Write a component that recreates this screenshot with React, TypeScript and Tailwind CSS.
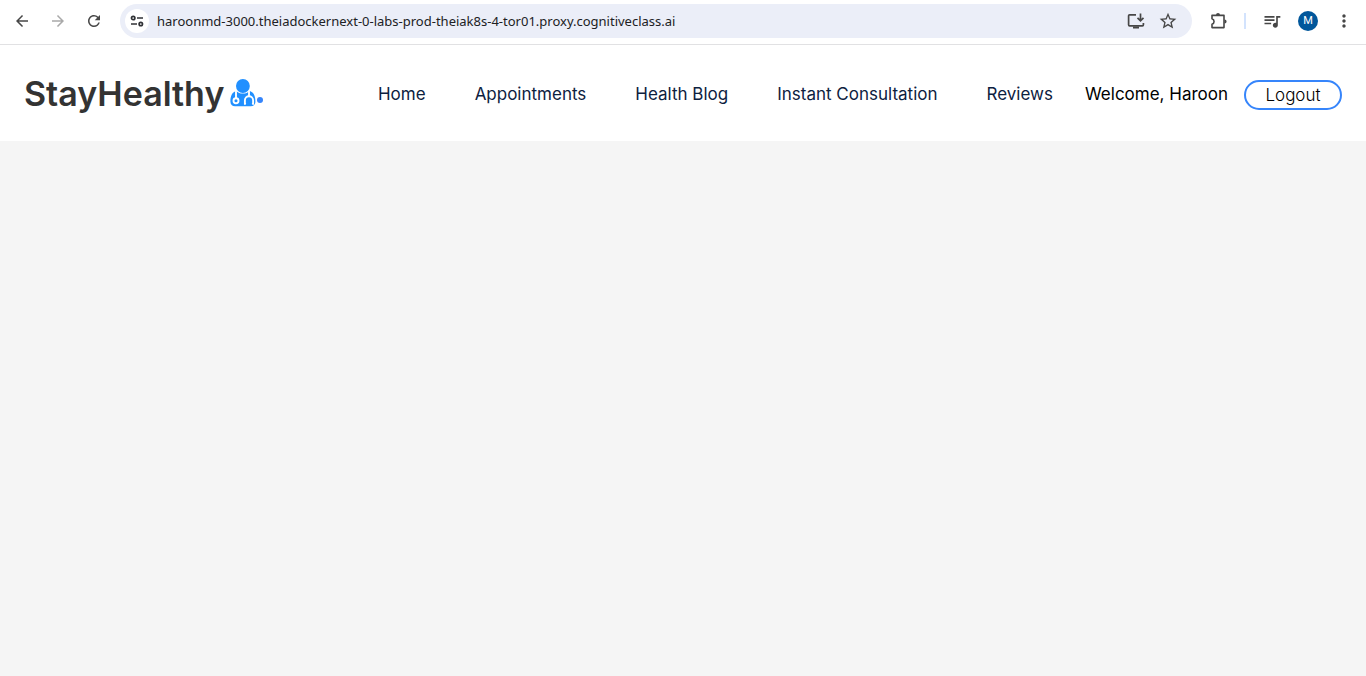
import React from "react";
import {
  MdArrowBack,
  MdArrowForward,
  MdRefresh,
  MdStarOutline,
  MdQueueMusic,
  MdMoreVert,
} from "react-icons/md";

const links = ["Home", "Appointments", "Health Blog", "Instant Consultation", "Reviews"];

function SiteSettingsIcon() {
  return (
    <svg viewBox="0 0 16 16" className="size-4" fill="none" stroke="#303236" strokeWidth="1.7" aria-hidden="true">
      <circle cx="4.2" cy="5" r="1.7" />
      <path d="M8 5h6M2 11h6" />
      <circle cx="11.8" cy="11" r="1.7" />
    </svg>
  );
}

function InstallIcon() {
  return (
    <svg viewBox="0 0 20 20" className="size-5" fill="none" stroke="#474747" strokeWidth="1.7" aria-hidden="true">
      <path d="M10 3.8H3.600a1 1 0 0 0-1 1v9a1 1 0 0 0 1 1h12.800a1 1 0 0 0 1-1V12" />
      <path d="M7 16.5h6" strokeWidth="2" />
      <path d="M14.5 2.5v7M11.5 6.8l3 3 3-3" />
    </svg>
  );
}

function ExtensionIcon() {
  return (
    <svg viewBox="0 0 20 20" className="size-5" aria-hidden="true">
      <path
        d="M4 4.400h12v12.200H4v-3.400a2.800 2.800 0 0 0 0-5.400z"
        fill="none"
        stroke="#474747"
        strokeWidth="1.6"
        strokeLinejoin="round"
      />
      <path d="M8 4a2 2 0 0 1 4 0zM16.500 8.400a2.100 2.100 0 0 1 0 4.200z" fill="#474747" />
    </svg>
  );
}

function DoctorIcon() {
  return (
    <svg viewBox="0 0 26 28" className="h-7 w-[26px]" aria-hidden="true">
      <path
        d="M6.2 12C2.600 12.800.4 16.500.4 22.500c0 3 1.800 4.800 4.600 4.800h15.800c2.800 0 4.600-1.800 4.600-4.800 0-6-2.200-9.700-5.800-10.500-1.600 1.600-4 2.600-6.700 2.600S7.800 13.600 6.200 12z"
        fill="#2190ff"
      />
      <circle cx="12.900" cy="7" r="6.900" fill="#2190ff" />
      <g fill="none" stroke="#fff" strokeWidth="1.900" strokeLinecap="round">
        <path d="M6 12.500v6.500" />
        <circle cx="6" cy="21.800" r="2.500" />
        <path d="M19 12.500v4.300" />
        <path d="M15.200 24.800h-.3v-3.500a4.100 4.100 0 0 1 8.200 0v3.500h-.3" />
      </g>
    </svg>
  );
}

function BrowserBar() {
  return (
    <div className="flex h-[45px] items-center border-b border-[#e1e1e3] bg-white px-3 pb-[2px] text-[#474747]">
      <div className="flex items-center gap-4">
        <button aria-label="Back" className="flex size-5 items-center justify-center">
          <MdArrowBack className="size-[18px]" />
        </button>
        <button aria-label="Forward" className="flex size-5 items-center justify-center text-[#a9a9a9]">
          <MdArrowForward className="size-[18px]" />
        </button>
        <button aria-label="Reload" className="flex size-5 items-center justify-center">
          <MdRefresh className="size-[18px]" />
        </button>
      </div>
      <div className="ml-4 flex h-[34px] min-w-0 flex-1 items-center rounded-full bg-[#ebeef8] pl-[5px] pr-[14px]">
        <button aria-label="Site information" className="flex size-6 items-center justify-center rounded-full bg-white">
          <SiteSettingsIcon />
        </button>
        <input
          aria-label="Address"
          readOnly
          value="haroonmd-3000.theiadockernext-0-labs-prod-theiak8s-4-tor01.proxy.cognitiveclass.ai"
          className="ml-2 min-w-0 flex-1 bg-transparent pt-[2px] font-['Noto_Sans',sans-serif] text-[13px] text-[#202124] outline-none"
        />
        <button aria-label="Install app" className="mr-3">
          <InstallIcon />
        </button>
        <button aria-label="Bookmark">
          <MdStarOutline className="size-5" />
        </button>
      </div>
      <div className="ml-4 flex items-center gap-4">
        <button aria-label="Extensions">
          <ExtensionIcon />
        </button>
        <span className="h-4 w-[2px] bg-[#d3e3fd]" />
        <button aria-label="Media controls">
          <MdQueueMusic className="size-5" />
        </button>
        <button
          aria-label="Profile"
          className="flex size-5 items-center justify-center rounded-full bg-[#01579b] font-[Roboto,sans-serif] text-[11px] text-white"
        >
          M
        </button>
        <button aria-label="Menu">
          <MdMoreVert className="size-5" />
        </button>
      </div>
    </div>
  );
}

export default function App() {
  return (
    <div className="flex min-h-screen flex-col bg-[#f5f5f5] font-[Inter,sans-serif]">
      <BrowserBar />
      <nav className="flex h-24 items-center justify-between bg-white px-6">
        <a href="#home" className="flex items-center text-[34px] font-semibold text-[#333]">
          StayHealthy
          <span className="ml-[6px] flex items-end">
            <DoctorIcon />
            <span className="mb-1 ml-px size-[6px] rounded-full bg-[#3685fb]" />
          </span>
        </a>
        <div className="flex items-center pt-[2px]">
          <ul className="flex items-center gap-[49px] text-[17px] leading-6 text-[#0d213f]">
            {links.map((label) => (
              <li key={label}>
                <a href="#section">{label}</a>
              </li>
            ))}
          </ul>
          <span className="ml-8 text-[17px] leading-6 text-black">Welcome, Haroon</span>
          <button className="ml-4 mt-[2px] h-[30px] w-[98px] rounded-full border-2 border-[#3685fb] text-[17px] leading-6 font-light text-black">
            Logout
          </button>
        </div>
      </nav>
    </div>
  );
}
